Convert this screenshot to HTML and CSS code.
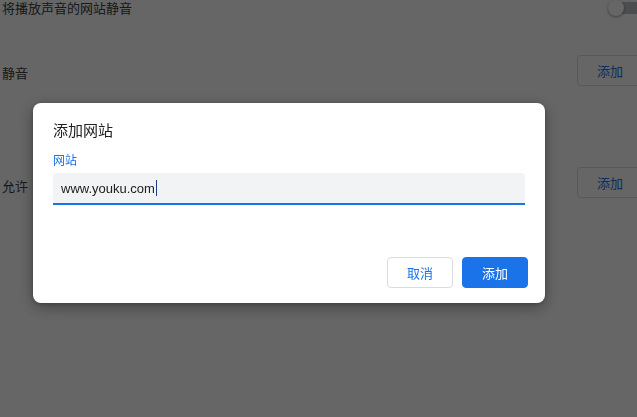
FILE: index.html
```html
<!DOCTYPE html>
<html lang="zh-CN">
<head>
<meta charset="utf-8">
<title>添加网站</title>
<link rel="stylesheet" href="styles.css">
</head>
<body>
<div class="page">
  <div class="row row-head">
    <span class="row-text">将播放声音的网站静音</span>
    <span class="toggle"><span class="knob"></span></span>
  </div>
  <div class="row row-mute">
    <span class="row-text">静音</span>
    <button class="page-btn">添加</button>
  </div>
  <div class="row row-allow">
    <span class="row-text">允许</span>
    <button class="page-btn">添加</button>
  </div>
</div>
<div class="overlay">
  <div class="dialog">
    <div class="dialog-title">添加网站</div>
    <div class="field-label">网站</div>
    <div class="field">
      <span class="field-value">www.youku.com</span><span class="caret"></span>
    </div>
    <div class="actions">
      <button class="btn btn-cancel">取消</button>
      <button class="btn btn-add">添加</button>
    </div>
  </div>
</div>
</body>
</html>
```
FILE: styles.css
```css
html, body {
  margin: 0;
  padding: 0;
}
body {
  width: 637px;
  height: 417px;
  overflow: hidden;
  background: #ffffff;
  font-family: "Noto Sans CJK SC", "Noto Sans", sans-serif;
  color: #3c4043;
  position: relative;
}
.page {
  padding-left: 2px;
}
.row {
  display: flex;
  justify-content: space-between;
  align-items: flex-start;
}
.row-text {
  font-size: 13px;
  line-height: 20px;
}
.row-head {
  height: 15px;
  align-items: center;
}
.row-mute {
  margin-top: 40px;
  height: 31px;
}
.row-mute .row-text {
  padding-top: 8px;
}
.row-allow {
  margin-top: 81px;
  height: 31px;
}
.row-allow .row-text {
  padding-top: 9px;
}
.toggle {
  position: relative;
  flex-shrink: 0;
  width: 36px;
  height: 12px;
  margin-right: -7px;
  background: #bdc1c6;
  border-radius: 6px;
}
.knob {
  position: absolute;
  left: 0;
  top: -2px;
  width: 16px;
  height: 16px;
  border-radius: 50%;
  background: #ffffff;
  box-shadow: 0 1px 3px rgba(0,0,0,0.4);
}
.page-btn {
  flex-shrink: 0;
  width: 66px;
  height: 31px;
  margin-right: -6px;
  box-sizing: border-box;
  border: 1px solid #dadce0;
  border-radius: 4px;
  background: #ffffff;
  color: #1a73e8;
  font-family: "Noto Sans CJK SC", sans-serif;
  font-size: 13px;
  padding: 0;
}
.overlay {
  position: fixed;
  inset: 0;
  background: rgba(0,0,0,0.6);
  padding: 103px 0 0 33px;
}
.dialog {
  width: 512px;
  height: 200px;
  box-sizing: border-box;
  background: #ffffff;
  border-radius: 8px;
  box-shadow: 0 4px 16px rgba(0,0,0,0.35), 0 1px 4px rgba(0,0,0,0.2);
  padding: 17px 17px 15px 20px;
  display: flex;
  flex-direction: column;
}
.dialog-title {
  font-size: 15px;
  line-height: 20px;
  color: #202124;
}
.field-label {
  margin-top: 12px;
  font-size: 12px;
  line-height: 16px;
  color: #1a73e8;
}
.field {
  margin-top: 5px;
  margin-right: 3px;
  height: 30px;
  background: #f1f3f4;
  border-bottom: 2px solid #1a73e8;
  border-radius: 4px 4px 0 0;
  display: flex;
  align-items: center;
  padding-left: 8px;
}
.field-value {
  font-family: "Liberation Sans", Arial, sans-serif;
  font-size: 13px;
  color: #202124;
}
.caret {
  width: 1px;
  height: 16px;
  background: #1a3f8a;
  margin-left: 1px;
}
.actions {
  margin-top: auto;
  display: flex;
  justify-content: flex-end;
  gap: 9px;
}
.btn {
  width: 66px;
  height: 31px;
  box-sizing: border-box;
  border-radius: 4px;
  font-family: "Noto Sans CJK SC", sans-serif;
  font-size: 13px;
  padding: 0;
}
.btn-cancel {
  background: #ffffff;
  border: 1px solid #dadce0;
  color: #1a73e8;
}
.btn-add {
  background: #1a73e8;
  border: 1px solid #1a73e8;
  color: #ffffff;
}
```
